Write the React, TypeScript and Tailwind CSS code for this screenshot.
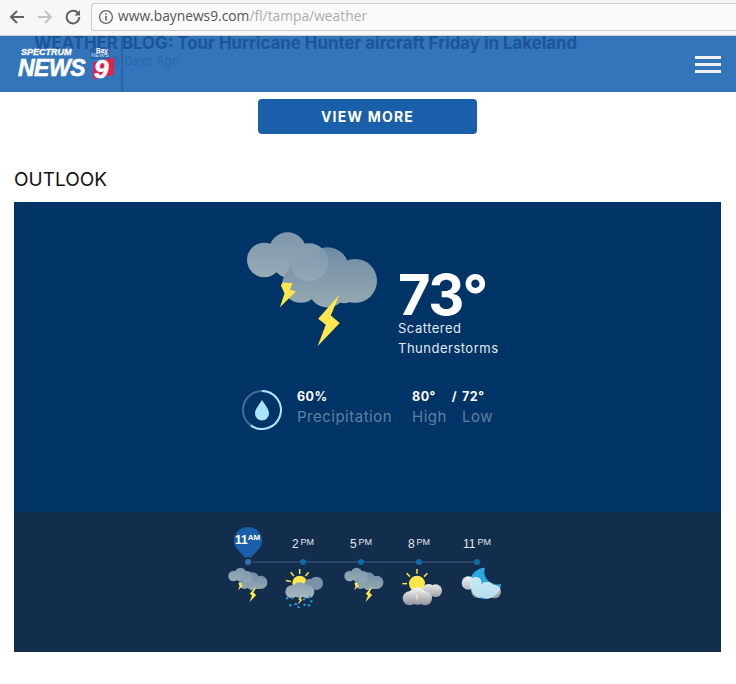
import React from 'react';

const Bolt = ({ points, fill = '#fde74c' }: { points: string; fill?: string }) => <polygon points={points} fill={fill} />;

const Lobes = ({ circles, fill }: { circles: number[][]; fill: string }) => (
  <g fill={fill}>
    {circles.map(([cx, cy, r]) => (
      <circle key={`${cx}-${cy}`} cx={cx} cy={cy} r={r} />
    ))}
  </g>
);

const backLobes = [[105, 105, 52], [175, 78, 56], [240, 112, 57], [170, 125, 32], [215, 130, 28]];
const frontLobes = [[215, 178, 56], [295, 132, 65], [378, 168, 66], [295, 190, 58], [225, 150, 48], [345, 195, 40]];

// Orage : deux nuages et deux eclairs
const ThunderIcon = ({ width, id }: { width: number; id: string }) => (
  <svg width={width} height={(width * 355) / 400} viewBox="50 15 400 355">
    <defs>
      <linearGradient id={`${id}a`} gradientUnits="userSpaceOnUse" x1="0" y1="22" x2="0" y2="157">
        <stop offset="0" stopColor="#7f97ac" />
        <stop offset="1" stopColor="#97abb6" />
      </linearGradient>
      <linearGradient id={`${id}b`} gradientUnits="userSpaceOnUse" x1="0" y1="67" x2="0" y2="248">
        <stop offset="0" stopColor="#6f8ba6" />
        <stop offset="1" stopColor="#96abb1" />
      </linearGradient>
      <clipPath id={`${id}c`}>
        {frontLobes.map(([cx, cy, r]) => (
          <circle key={`${cx}-${cy}`} cx={cx} cy={cy} r={r} />
        ))}
      </clipPath>
    </defs>
    <Lobes circles={backLobes} fill={`url(#${id}a)`} />
    <Lobes circles={frontLobes} fill={`url(#${id}b)`} />
    <g clipPath={`url(#${id}c)`}>
      <circle cx={240} cy={112} r={57} fill="#ffffff" fillOpacity={0.12} />
    </g>
    <Bolt points="160,173 190,175 182,195 200,200 152,247 166,205 155,182" />
    <Bolt points="331,210 305,272 332,295 265,365 290,300 267,282" />
  </svg>
);

const Rays = ({ cx, cy, inner, outer, angles, stroke = '#fde74c', w = 4 }: { cx: number; cy: number; inner: number; outer: number; angles: number[]; stroke?: string; w?: number }) => (
  <>
    {angles.map((a) => {
      const r = (a * Math.PI) / 180;
      return (
        <line
          key={a}
          x1={cx + Math.cos(r) * inner}
          y1={cy + Math.sin(r) * inner}
          x2={cx + Math.cos(r) * outer}
          y2={cy + Math.sin(r) * outer}
          stroke={stroke}
          strokeWidth={w}
        />
      );
    })}
  </>
);

const RainSunIcon = () => {
  const drops = [[202, 229], [218, 228], [212, 250], [228, 246], [237, 256], [253, 232], [270, 225], [275, 238], [255, 248], [268, 250]];
  return (
    <svg width={40} height={41} viewBox="190 135 120 123">
      <defs>
        <linearGradient id="rainCloud" gradientUnits="userSpaceOnUse" x1="0" y1="175" x2="0" y2="228">
          <stop offset="0" stopColor="#8aa0b2" />
          <stop offset="1" stopColor="#a7b7bf" />
        </linearGradient>
      </defs>
      <Rays cx={240} cy={183} inner={27} outer={42} angles={[-90, -50, -130, -170]} w={4.5} />
      <circle cx={240} cy={183} r={22} fill="#fde74c" />
      <Lobes circles={[[270, 186, 16], [290, 184, 20]]} fill="#7b92a6" />
      <Lobes circles={[[216, 209, 19], [240, 204, 23], [264, 209, 20]]} fill="url(#rainCloud)" />
      <Bolt points="246,222 236,232 241,235 232,250 248,234 243,231" />
      {drops.map(([x, y]) => (
        <circle key={`${x}-${y}`} cx={x} cy={y} r={3.8} fill="#1e9ad6" />
      ))}
    </svg>
  );
};

const SunCloudIcon = () => (
  <svg width={42} height={39} viewBox="122 135 126 117">
    <defs>
      <linearGradient id="sunBack" gradientUnits="userSpaceOnUse" x1="0" y1="182" x2="0" y2="226">
        <stop offset="0" stopColor="#f4f4f4" />
        <stop offset="1" stopColor="#9a9ea5" />
      </linearGradient>
      <linearGradient id="sunFront" gradientUnits="userSpaceOnUse" x1="0" y1="196" x2="0" y2="250">
        <stop offset="0" stopColor="#f7f7f7" />
        <stop offset="1" stopColor="#8f939a" />
      </linearGradient>
    </defs>
    <Rays cx={170} cy={185} inner={30} outer={44} angles={[-90, -45, -135, 180]} w={4.5} />
    <circle cx={170} cy={185} r={24} fill="#fde74c" />
    <Lobes circles={[[205, 206, 20], [226, 206, 19]]} fill="url(#sunBack)" />
    <Lobes circles={[[148, 229, 21], [172, 222, 26], [194, 229, 21]]} fill="url(#sunFront)" />
    <Rays cx={170} cy={185} inner={32} outer={47} angles={[90]} stroke="#fde9a0" w={4.5} />
    <Rays cx={170} cy={185} inner={26} outer={36} angles={[50, 130]} stroke="#fff6c0" w={4} />
  </svg>
);

const moonPath = 'M372 142A47 47 0 1 0 420 190A38 38 0 0 1 372 142Z';
const moonClouds = [[322, 188, 20], [345, 186, 16], [352, 212, 21], [378, 210, 25], [400, 214, 20]];

const MoonCloudIcon = () => (
  <svg width={42} height={32} viewBox="298 140 124 96">
    <defs>
      <linearGradient id="moonCloud" gradientUnits="userSpaceOnUse" x1="0" y1="168" x2="0" y2="236">
        <stop offset="0" stopColor="#f2f4f6" />
        <stop offset="1" stopColor="#8f939a" />
      </linearGradient>
      <clipPath id="moonClip">
        {moonClouds.map(([cx, cy, r]) => (
          <circle key={`${cx}-${cy}`} cx={cx} cy={cy} r={r} />
        ))}
      </clipPath>
    </defs>
    <path d={moonPath} fill="#2ba8e0" />
    <Lobes circles={moonClouds} fill="url(#moonCloud)" />
    <g clipPath="url(#moonClip)">
      <path d={moonPath} fill="#bfeafb" fillOpacity={0.85} />
    </g>
  </svg>
);

const hours = [
  { hour: '2', shift: '', icon: <RainSunIcon /> },
  { hour: '5', shift: 'ml-[6px]', icon: <ThunderIcon width={40} id="th5" /> },
  { hour: '8', shift: 'ml-[5px]', icon: <SunCloudIcon /> },
  { hour: '11', shift: 'ml-[7px] mt-[2px]', icon: <MoonCloudIcon /> },
];

const BrowserBar = () => (
  <div className="flex h-9 items-center border-b border-[#cfcfcf] bg-[#f7f7f7] pb-[2px]">
    <div className="flex w-[91px] shrink-0 items-center pl-[8px] text-[#636363]">
      <svg width="17" height="16" viewBox="0 0 17 16" fill="none" stroke="currentColor" strokeWidth="2">
        <path d="M16 8H3M9 2 3 8l6 6" />
      </svg>
      <svg className="ml-[12px] text-[#c4c4c4]" width="16" height="16" viewBox="0 0 16 16" fill="none" stroke="currentColor" strokeWidth="2">
        <path d="M1 8h13M8 2l6 6-6 6" />
      </svg>
      <svg className="ml-[12px]" width="16" height="16" viewBox="0 0 16 16" fill="none" stroke="currentColor" strokeWidth="2">
        <path d="M13.5 5A6.3 6.3 0 1 0 14.3 8" />
        <path d="M15 1v5.5H9.5z" fill="currentColor" stroke="none" />
      </svg>
    </div>
    <div className="flex h-7 flex-1 items-center rounded-l-[3px] border border-r-0 border-[#cccccc] bg-[#fafafa] pl-[6px] font-['Open_Sans',sans-serif] text-[13.8px]">
      <svg width="16" height="16" viewBox="0 0 16 16" fill="none" stroke="#666666" strokeWidth="1.3">
        <circle cx="8" cy="8" r="6.4" />
        <path d="M8 7v4.5M8 4.2v1.6" strokeWidth="1.6" />
      </svg>
      <span className="ml-[4px] text-[#555555]">www.baynews9.com</span>
      <span className="text-[#adadad]">/fl/tampa/weather</span>
    </div>
  </div>
);

const Logo = () => (
  <div className="relative h-[34px] w-[100px] font-['Liberation_Sans',sans-serif] italic text-white">
    <span className="absolute left-[3px] top-[-1px] text-[9px] font-bold leading-[12px] [-webkit-text-stroke:0.3px_white]">SPECTRUM</span>
    <span className="absolute left-0 top-[8px] text-[23px] font-bold leading-[26px] tracking-[-0.5px] [-webkit-text-stroke:0.6px_white]">NEWS</span>
    <span className="absolute left-[72px] top-[1px] h-[11px] w-[20px] bg-[#2a63a8]" />
    <span className="absolute left-[78px] top-[0px] text-[6.5px] font-bold not-italic leading-[8px]">Bay</span>
    <span className="absolute left-[73px] top-[5px] text-[6px] not-italic leading-[7px] text-[#d5e3f3]">NEWS</span>
    <span className="absolute left-[75px] top-[13px] h-[17px] w-[21px] skew-y-[-14deg] bg-[#e0224e]" />
    <span className="absolute left-[76px] top-[8px] text-[26px] font-bold leading-[28px] [-webkit-text-stroke:0.6px_white]">9</span>
  </div>
);

const Header = () => (
  <header className="relative h-14 overflow-hidden bg-[#3375bb]">
    {/* Contenu de la page qui defile sous la barre translucide */}
    <div className="absolute left-[34px] top-[-3px] whitespace-nowrap font-['Inter',sans-serif] text-[16.85px] font-bold leading-[20px] text-[#1d5498]">
      WEATHER BLOG: Tour Hurricane Hunter aircraft Friday in Lakeland
    </div>
    <div className="absolute left-[113px] top-[17px] whitespace-nowrap font-['Inter',sans-serif] text-[11.5px] leading-[16px] tracking-[0.4px] text-[#2b64a8]">
      8 Days Ago
    </div>
    <div className="absolute bottom-0 left-[121px] top-0 w-[2px] bg-[#2b62a2]" />
    <div className="relative flex h-full items-center justify-between pl-[18px] pr-[15px]">
      <Logo />
      <div className="flex w-[26px] flex-col gap-[4px]">
        <span className="h-[3px] bg-[#f0f0f0]" />
        <span className="h-[3px] bg-[#f0f0f0]" />
        <span className="h-[3px] bg-[#f0f0f0]" />
      </div>
    </div>
  </header>
);

const Current = () => (
  <div className="flex h-[310px] flex-col bg-[#003366] font-['Inter',sans-serif] text-white">
    <div className="ml-[232px] mt-[28px] flex">
      <ThunderIcon width={133} id="big" />
      <div className="ml-[19px] mt-[43px]">
        <div className="text-[56px] font-bold leading-[45px] tracking-[-1.5px]">73°</div>
        <div className="text-[13px] leading-[20px] tracking-[0.5px] text-[#e3e9f0]">
          Scattered
          <br />
          Thunderstorms
        </div>
      </div>
    </div>
    <div className="ml-[228px] mt-[32px] flex items-center">
      <svg width="40" height="40" viewBox="0 0 40 40" fill="none">
        <circle cx="20" cy="20" r="19" stroke="#4a6c90" strokeWidth="2" />
        <path d="M20 1A19 19 0 1 1 8.8 35.4" stroke="#a9e2fb" strokeWidth="2" />
        <path d="M20 10c3 5 7 9 7 13.5a7 7 0 0 1-14 0C13 19 17 15 20 10z" fill="#a9e2fb" />
      </svg>
      <div className="ml-[15px] mt-[-6px] w-[115px]">
        <div className="text-[12.5px] font-bold leading-[20px] tracking-[0.5px]">60%</div>
        <div className="text-[15px] leading-[20px] tracking-[0.5px] text-[#5f80a2]">Precipitation</div>
      </div>
      <div className="mt-[-6px] w-[50px]">
        <div className="text-[12.5px] font-bold leading-[20px] tracking-[0.5px]">
          80°<span className="ml-[16px]">/</span>
        </div>
        <div className="text-[15px] leading-[20px] tracking-[0.5px] text-[#5f80a2]">High</div>
      </div>
      <div className="mt-[-6px]">
        <div className="text-[12.5px] font-bold leading-[20px] tracking-[0.5px]">72°</div>
        <div className="text-[15px] leading-[20px] tracking-[0.5px] text-[#5f80a2]">Low</div>
      </div>
    </div>
  </div>
);

const Forecast = () => (
  <div className="h-[140px] bg-[#132d4d] pt-[15px] font-['Liberation_Sans',sans-serif] text-[#e4e8ee]">
    <div className="relative ml-[208px] flex">
      {/* Ligne du temps derriere les points */}
      <div className="absolute left-[26px] top-[34px] h-[2px] w-[229px] bg-[#2b4568]" />
      <div className="flex w-[52px] flex-col items-center">
        <div className="relative h-[36px] w-[28px]">
          <svg width="28" height="36" viewBox="0 0 28 36">
            <path d="M14 36C11 27 0 23 0 14a14 14 0 0 1 28 0c0 9-11 13-14 22z" fill="#1a5fa9" />
          </svg>
          <span className="absolute left-[1px] top-[6px] whitespace-nowrap text-[12px] font-bold leading-[14px] text-white">
            11<sup className="text-[8px] leading-none">AM</sup>
          </span>
        </div>
        <div className="relative mt-[-4px] h-[6px] w-[6px] rounded-full bg-[#2f74b8] ring-2 ring-[#1b2f4a]" />
        <div className="mt-[2px]">
          <ThunderIcon width={40} id="th11" />
        </div>
      </div>
      {hours.map((item) => (
        <div key={item.hour} className="flex w-[58px] flex-col items-center">
          <div className="flex h-[32px] items-start pt-[10px] text-[12px] leading-[14px]">
            {item.hour}
            <span className="ml-[2px] text-[9px] leading-[11px]">PM</span>
          </div>
          <div className="relative h-[6px] w-[6px] rounded-full bg-[#0f6cab]" />
          <div className={`mt-[2px] ${item.shift}`}>{item.icon}</div>
        </div>
      ))}
    </div>
  </div>
);

export default function App() {
  return (
    <div className="h-[684px] overflow-hidden bg-white">
      <BrowserBar />
      <Header />
      <div className="ml-[258px] mt-[7px]">
        <button className="h-[35px] w-[219px] rounded-[4px] bg-[#1a5fa9] pb-[1px] font-['Inter',sans-serif] text-[14px] font-bold tracking-[1.2px] text-white">
          VIEW MORE
        </button>
      </div>
      <h2 className="mx-[14px] mt-[35px] font-['Inter',sans-serif] text-[19px] font-normal leading-[22px] text-[#111111]">OUTLOOK</h2>
      <div className="ml-[14px] mr-[15px] mt-[11px]">
        <Current />
        <Forecast />
      </div>
    </div>
  );
}
